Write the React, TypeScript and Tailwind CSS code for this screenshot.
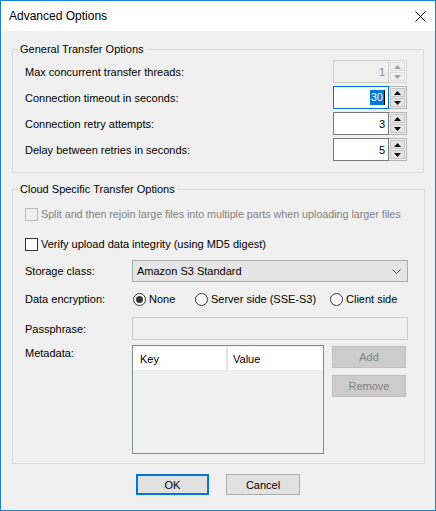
import React from "react";

const Tri = ({ down, color }: { down?: boolean; color: string }) => (
  <svg width="7" height="4" viewBox="0 0 7 4">
    <polygon points={down ? "0,0 7,0 3.5,4" : "0,4 7,4 3.5,0"} fill={color} />
  </svg>
);

const Spinner = ({
  value,
  disabled,
  focused,
}: {
  value: string;
  disabled?: boolean;
  focused?: boolean;
}) => {
  const box = disabled
    ? "border-[#cccccc] bg-[#f0f0f0] text-[#838383]"
    : focused
    ? "border-[#0078d7] bg-white"
    : "border-[#7a7a7a] bg-white";
  const tri = disabled ? "#a3a3a3" : "#000000";
  return (
    <div className="flex h-[23px]">
      <div className={`w-[56px] h-full border flex items-center justify-end pr-[3px] ${box}`}>
        {focused ? (
          <div className="flex items-center">
            <span className="bg-[#0078d7] text-white leading-[15px] px-[1px]">{value}</span>
            <span className="w-[1px] h-[15px] bg-black" />
          </div>
        ) : (
          <span>{value}</span>
        )}
      </div>
      <div
        className={`w-[18px] h-full border border-l-0 flex flex-col p-[1px] gap-[1px] ${
          disabled ? "border-[#d9d9d9]" : "border-[#b4b4b4]"
        }`}
      >
        <div
          className={`flex-1 border flex items-center justify-center ${
            disabled ? "bg-[#f0f0f0] border-[#e0e0e0]" : "bg-[#e5e5e5] border-[#c4c4c4]"
          }`}
        >
          <Tri color={tri} />
        </div>
        <div
          className={`flex-1 border flex items-center justify-center ${
            disabled ? "bg-[#f0f0f0] border-[#e0e0e0]" : "bg-[#e5e5e5] border-[#c4c4c4]"
          }`}
        >
          <Tri down color={tri} />
        </div>
      </div>
    </div>
  );
};

const Radio = ({ checked }: { checked?: boolean }) => (
  <span className="w-[13px] h-[13px] rounded-full border border-[#333333] bg-white flex items-center justify-center shrink-0">
    {checked && <span className="w-[7px] h-[7px] rounded-full bg-[#333333]" />}
  </span>
);

const App = () => {
  const spinRows = [
    { label: "Max concurrent transfer threads:", value: "1", disabled: true },
    { label: "Connection timeout in seconds:", value: "30", focused: true },
    { label: "Connection retry attempts:", value: "3" },
    { label: "Delay between retries in seconds:", value: "5" },
  ];

  return (
    <div className="w-[436px] h-[511px] border border-[#1883d7] flex flex-col font-['Liberation_Sans',Arial,sans-serif] text-[11px] leading-[16px] text-black">
      <div className="h-[30px] bg-white flex items-center justify-between pl-[8px] pr-[9px] shrink-0">
        <span className="text-[12px]">Advanced Options</span>
        <svg width="11" height="11" viewBox="0 0 11 11">
          <path d="M0.5 0.5 L10.5 10.5 M10.5 0.5 L0.5 10.5" stroke="#000" strokeWidth="1" />
        </svg>
      </div>

      <div className="flex-1 bg-[#f0f0f0] px-[11px] flex flex-col">
        <fieldset className="mt-[10px] border border-[#dcdcdc] px-[5px] pb-[11px]">
          <legend className="px-[2px] leading-[16px]">General Transfer Options</legend>
          <div className="pl-[7px] pr-[11px] pt-[3px] flex flex-col gap-[3px]">
            {spinRows.map((r) => (
              <div key={r.label} className="h-[23px] flex items-center justify-between">
                <span>{r.label}</span>
                <Spinner value={r.value} disabled={r.disabled} focused={r.focused} />
              </div>
            ))}
          </div>
        </fieldset>

        <fieldset className="mt-[8px] border border-[#dcdcdc] px-[5px] pb-[9px]">
          <legend className="px-[2px] leading-[16px]">Cloud Specific Transfer Options</legend>
          <div className="pl-[7px] pr-[11px] pt-[7px] flex flex-col">
            <div className="h-[20px] flex items-center gap-[3px] text-[#838383]">
              <span className="w-[13px] h-[13px] border border-[#bcbcbc] bg-[#f0f0f0] shrink-0" />
              <span className="whitespace-nowrap text-[10.8px] tracking-[-0.05px]">
                Split and then rejoin large files into multiple parts when uploading larger files
              </span>
            </div>
            <div className="h-[20px] mt-[10px] flex items-center gap-[3px]">
              <span className="w-[13px] h-[13px] border border-[#333333] bg-white shrink-0" />
              <span>Verify upload data integrity (using MD5 digest)</span>
            </div>
            <div className="h-[22px] mt-[6px] flex items-center">
              <span className="w-[107px]">Storage class:</span>
              <div className="w-[276px] h-full border border-[#acacac] bg-[#e5e5e5] flex items-center justify-between pl-[4px] pr-[6px]">
                <span>Amazon S3 Standard</span>
                <svg width="9" height="5" viewBox="0 0 9 5">
                  <polyline points="0.5,0.5 4.5,4.5 8.5,0.5" fill="none" stroke="#444" strokeWidth="1" />
                </svg>
              </div>
            </div>
            <div className="h-[20px] mt-[7px] flex items-center">
              <span className="w-[108px]">Data encryption:</span>
              <div className="w-[62px] flex items-center gap-[3px]">
                <Radio checked />
                <span>None</span>
              </div>
              <div className="w-[135px] flex items-center gap-[3px]">
                <Radio />
                <span>Server side (SSE-S3)</span>
              </div>
              <div className="flex items-center gap-[3px]">
                <Radio />
                <span>Client side</span>
              </div>
            </div>
            <div className="h-[23px] mt-[8px] flex items-center">
              <span className="w-[107px]">Passphrase:</span>
              <div className="w-[276px] h-full border border-[#cccccc] bg-[#f0f0f0]" />
            </div>
            <div className="h-[109px] mt-[5px] flex">
              <span className="w-[107px]">Metadata:</span>
              <div className="w-[192px] h-full border border-[#828790] bg-[#f0f0f0] flex flex-col">
                <div className="h-[23px] mt-[1px] bg-white flex">
                  <div className="w-[95px] border-r-2 border-[#e5e5e5] pl-[7px] flex items-center">Key</div>
                  <div className="pl-[5px] flex items-center">Value</div>
                </div>
              </div>
              <div className="ml-[8px] flex flex-col gap-[7px] pt-[1px]">
                <div className="w-[74px] h-[22px] border border-[#bfbfbf] bg-[#cccccc] text-[#838383] flex items-center justify-center">
                  Add
                </div>
                <div className="w-[74px] h-[22px] border border-[#bfbfbf] bg-[#cccccc] text-[#838383] flex items-center justify-center">
                  Remove
                </div>
              </div>
            </div>
          </div>
        </fieldset>

        <div className="mt-[10px] flex justify-center gap-[17px]">
          <div className="w-[73px] h-[21px] border-2 border-[#0078d7] bg-[#e1e1e1] flex items-center justify-center">
            OK
          </div>
          <div className="w-[74px] h-[21px] border border-[#adadad] bg-[#e1e1e1] flex items-center justify-center">
            Cancel
          </div>
        </div>
      </div>
    </div>
  );
};

export default App;
